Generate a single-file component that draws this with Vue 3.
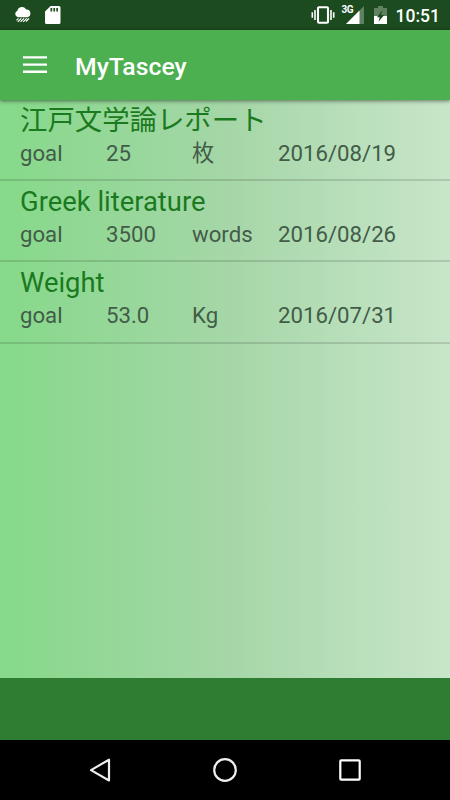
<template>
  <div class="screen">
    <header class="status-bar">
      <div class="status-left">
        <svg class="weather" width="18" height="16" viewBox="0 0 18 16">
          <path fill="#fff" d="M4 10.200a3.400 3.400 0 0 1-.6-6.500A4.700 4.700 0 0 1 12.200 2.600a3.900 3.900 0 0 1 1.500 7.600z" />
          <path stroke="#fff" stroke-width="1.200" d="M4.500 11.300l-2 2M7.300 11.300l-3.500 3.500M10 11.300l-3.500 3.500M12.700 11.300l-3.500 3.500M15 11.300l-3 3.200" />
        </svg>
        <svg class="sd" width="16" height="19" viewBox="0 0 16 19">
          <path fill="#fff" d="M5.600 0H14a1.500 1.500 0 0 1 1.500 1.500v15A1.500 1.500 0 0 1 14 18H1.500A1.500 1.500 0 0 1 0 16.500V5.600z" />
          <path fill="#1b4b1e" d="M5.500 2h1.700v3.600H5.500zM8.400 2h1.700v3.600H8.400zM11.300 2H13v3.600h-1.700z" />
        </svg>
      </div>
      <div class="status-right">
        <svg class="vibrate" width="24" height="18" viewBox="0 0 24 18">
          <rect x="7" y="1.200" width="10" height="15.600" rx="1" fill="none" stroke="#fff" stroke-width="2.100" />
          <path stroke="#fff" stroke-width="1.600" d="M4 4v10M1.300 6.200v5.600M20 4v10M22.700 6.200v5.600" />
        </svg>
        <div class="signal">
          <span class="network">3G</span>
          <svg width="18" height="18" viewBox="0 0 18 18">
            <path fill="#fff" fill-opacity=".3" d="M18 0v18H0z" />
            <path fill="#fff" d="M13.500 4.500V18H0z" />
          </svg>
        </div>
        <svg class="battery" width="13" height="18" viewBox="0 0 13 18">
          <path fill="#fff" fill-opacity=".3" d="M4 0h5v2h4v8H0V2h4z" />
          <path fill="#fff" d="M0 10h13v8H0z" />
          <path fill="#1b4b1e" d="M8.400 4.200L3 11.200h2.700l-1.200 4.500 5.700-6.700H7z" />
        </svg>
        <span class="clock">10:51</span>
      </div>
    </header>

    <div class="toolbar">
      <svg width="24" height="18" viewBox="0 0 24 18">
        <path stroke="#fff" stroke-width="2.400" d="M0 1.400h24M0 8.600h24M0 15.700h24" />
      </svg>
      <h1>MyTascey</h1>
    </div>

    <main class="content">
      <ul class="tasks">
        <li v-for="task in tasks" :key="task.title">
          <h2>{{ task.title }}</h2>
          <div class="details">
            <span>goal</span>
            <span>{{ task.goal }}</span>
            <span>{{ task.unit }}</span>
            <span>{{ task.date }}</span>
          </div>
        </li>
      </ul>
    </main>

    <div class="ad-space"></div>

    <nav class="nav-bar">
      <svg width="24" height="26" viewBox="0 0 24 26">
        <path fill="none" stroke="#eee" stroke-width="2.200" stroke-linejoin="round" d="M21 2.700v20.800L3 13.100z" />
      </svg>
      <svg width="24" height="26" viewBox="0 0 24 26">
        <circle cx="12" cy="13" r="10.800" fill="none" stroke="#eee" stroke-width="2.200" />
      </svg>
      <svg width="24" height="26" viewBox="0 0 24 26">
        <rect x="2.300" y="3.300" width="19.400" height="19.400" rx="1" fill="none" stroke="#fff" stroke-width="2.200" />
      </svg>
    </nav>
  </div>
</template>

<script setup>
const tasks = [
  { title: '江戸文学論レポート', goal: '25', unit: '枚', date: '2016/08/19' },
  { title: 'Greek literature', goal: '3500', unit: 'words', date: '2016/08/26' },
  { title: 'Weight', goal: '53.0', unit: 'Kg', date: '2016/07/31' },
];
</script>

<style>
body {
  margin: 0;
}
</style>

<style scoped>
.screen {
  display: flex;
  flex-direction: column;
  width: 450px;
  height: 800px;
  overflow: hidden;
  font-family: Roboto, "Noto Sans CJK JP", sans-serif;
}

svg {
  display: block;
  flex: none;
}

.status-bar {
  display: flex;
  justify-content: space-between;
  height: 30px;
  box-sizing: border-box;
  padding: 6px 10px 0 14px;
  background: #1b4b1e;
  color: #fff;
}

.status-left,
.status-right {
  display: flex;
}

.weather {
  margin-top: 1px;
}

.sd {
  margin-left: 13px;
}

.signal {
  display: flex;
  margin-left: 7px;
}

.network {
  width: 4px;
  margin-top: -2px;
  font-size: 10px;
  line-height: 12px;
  font-weight: 700;
  letter-spacing: -0.7px;
  white-space: nowrap;
}

.battery {
  margin-left: 10px;
}

.clock {
  margin-left: 9px;
  font-size: 17.5px;
  line-height: 20px;
  font-weight: 500;
}

.toolbar {
  display: flex;
  align-items: center;
  height: 70px;
  flex: none;
  box-sizing: border-box;
  padding-left: 23px;
  background: #4caf50;
  box-shadow: 0 1px 4px rgba(0, 0, 0, 0.5);
  z-index: 1;
}

h1 {
  margin: 4px 0 0 28px;
  font-size: 24.8px;
  line-height: 30px;
  font-weight: 500;
  color: #fff;
}

.content {
  flex: 1;
  background: linear-gradient(to right, #86d98a, #a5d6a7 50%, #c8e6c9);
}

.tasks {
  margin: 0;
  padding: 0;
  list-style: none;
}

li {
  height: 81.2px;
  box-sizing: border-box;
  padding: 4px 0 0 20px;
  border-bottom: 2px solid rgba(0, 0, 0, 0.13);
}

h2 {
  margin: 0;
  height: 32px;
  font-size: 27.4px;
  line-height: 34px;
  font-weight: 400;
  color: #1b7a20;
}

.details {
  display: grid;
  grid-template-columns: 86px 86px 86px 1fr;
  height: 34px;
  font-size: 22.2px;
  line-height: 34px;
  color: #425c48;
}

.ad-space {
  height: 62px;
  background: #2e7d32;
}

.nav-bar {
  display: flex;
  justify-content: space-between;
  height: 60px;
  box-sizing: border-box;
  padding: 17px 88px 0;
  background: #000;
}
</style>
